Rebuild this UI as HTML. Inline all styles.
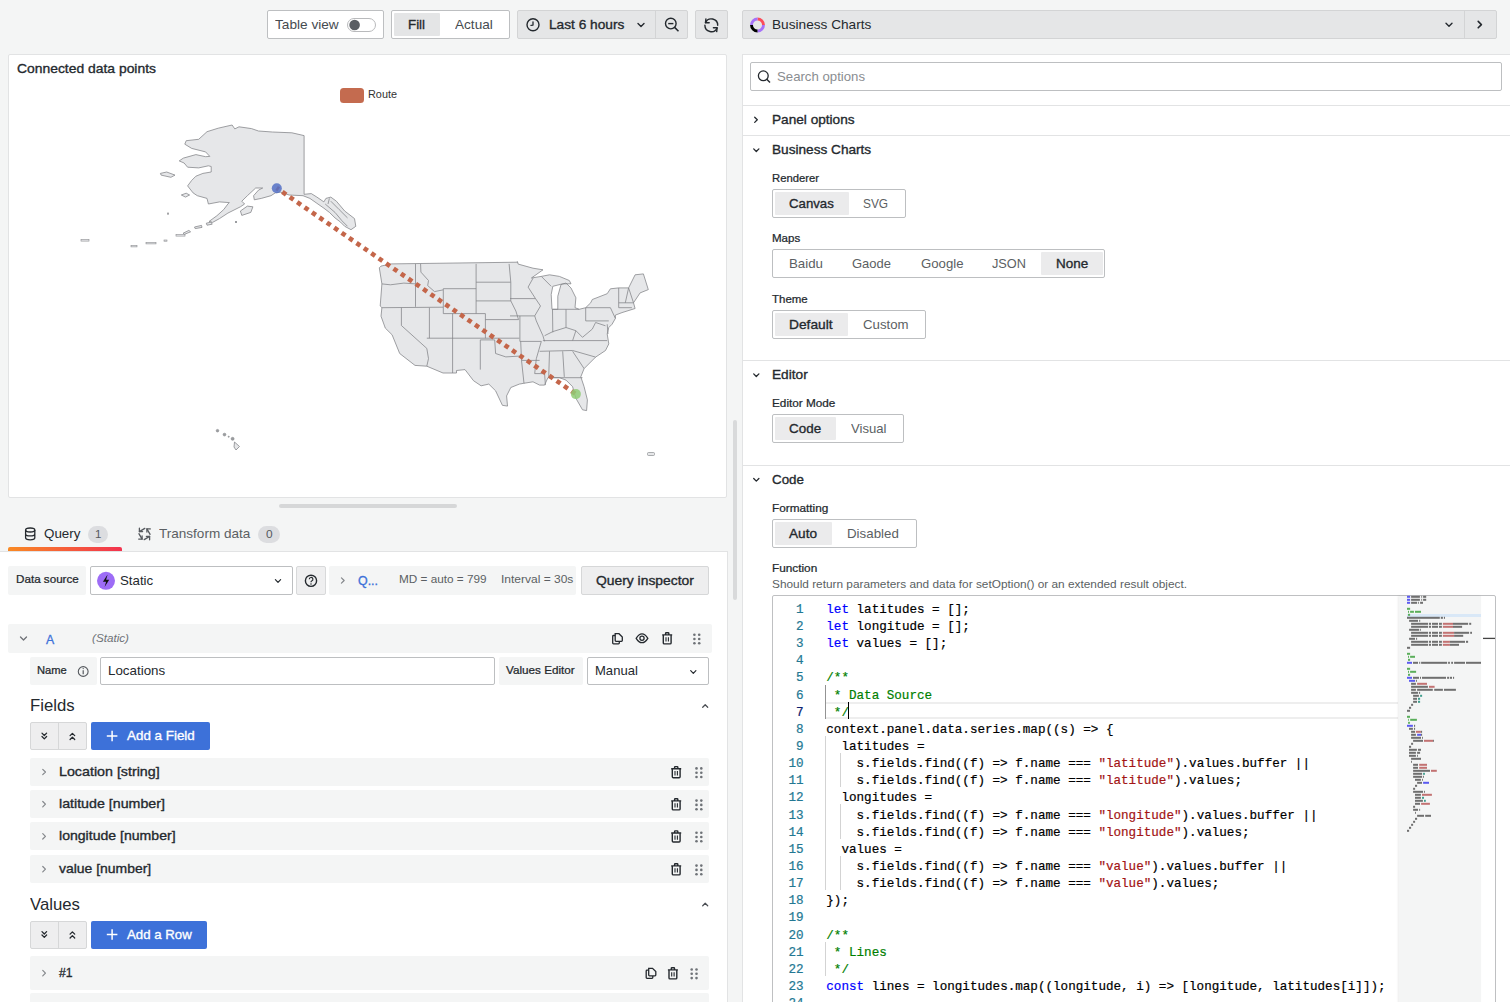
<!DOCTYPE html>
<html><head><meta charset="utf-8"><style>
html,body{margin:0;padding:0}
body{width:1510px;height:1002px;position:relative;overflow:hidden;background:#f4f5f5;font-family:"Liberation Sans",sans-serif}
.b{position:absolute;display:block}
.t{position:absolute;white-space:pre;font-family:"Liberation Sans",sans-serif}
.m{position:absolute;white-space:pre;font-family:"Liberation Mono",monospace;-webkit-text-stroke:0.2px currentColor}
</style></head><body>
<div class="b" style="left:267.00px;top:10.00px;width:117.00px;height:29.00px;background:#fff;border:1px solid #bdbfc1;border-radius:2px;box-sizing:border-box"></div>
<div class="t" style="left:275.20px;top:16.25px;line-height:17px;font-size:12.8px;font-weight:400;color:#464b50;transform:scaleX(1.0659);transform-origin:0 0;">Table view</div>
<div class="b" style="left:347.00px;top:18.00px;width:29.00px;height:14.00px;background:#fff;border:1px solid #b9babc;border-radius:7px;box-sizing:border-box"></div>
<div class="b" style="left:391.00px;top:10.00px;width:119.00px;height:29.00px;background:#fff;border:1px solid #bdbfc1;border-radius:2px;box-sizing:border-box"></div>
<div class="b" style="left:394.00px;top:13.00px;width:46.00px;height:23.00px;background:#e4e5e6;border-radius:1px"></div>
<div class="t" style="left:408.40px;top:16.25px;line-height:17px;font-size:12.8px;font-weight:400;color:#24292e;transform:scaleX(1.0398);transform-origin:0 0;-webkit-text-stroke:0.330px #24292e;">Fill</div>
<div class="t" style="left:454.60px;top:16.25px;line-height:17px;font-size:12.8px;font-weight:400;color:#464b50;transform:scaleX(1.0626);transform-origin:0 0;">Actual</div>
<div class="b" style="left:517.00px;top:10.00px;width:171.00px;height:29.00px;background:#e5e6e7;border:1px solid #d3d4d5;border-radius:2px;box-sizing:border-box"></div>
<div class="b" style="left:655.00px;top:10.00px;width:1.00px;height:29.00px;background:#d3d4d5"></div>
<div class="t" style="left:548.70px;top:16.25px;line-height:17px;font-size:12.8px;font-weight:400;color:#24292e;transform:scaleX(1.0690);transform-origin:0 0;-webkit-text-stroke:0.330px #24292e;">Last 6 hours</div>
<div class="b" style="left:695.00px;top:10.00px;width:33.00px;height:29.00px;background:#e5e6e7;border:1px solid #d3d4d5;border-radius:2px;box-sizing:border-box"></div>
<div class="b" style="left:742.00px;top:10.00px;width:755.00px;height:29.00px;background:#e5e6e7;border:1px solid #d3d4d5;border-radius:2px;box-sizing:border-box"></div>
<div class="b" style="left:1464.00px;top:10.00px;width:1.00px;height:29.00px;background:#d3d4d5"></div>
<div class="t" style="left:771.60px;top:16.25px;line-height:17px;font-size:12.8px;font-weight:400;color:#24292e;transform:scaleX(1.0666);transform-origin:0 0;">Business Charts</div>
<div class="b" style="left:8.00px;top:54.00px;width:719.00px;height:444.00px;background:#fff;border:1px solid #e2e3e4;border-radius:2px;box-sizing:border-box"></div>
<div class="t" style="left:17.00px;top:59.95px;line-height:17px;font-size:12.8px;font-weight:400;color:#24292e;transform:scaleX(1.0852);transform-origin:0 0;-webkit-text-stroke:0.330px #24292e;">Connected data points</div>
<div class="b" style="left:340.00px;top:88.00px;width:24.00px;height:14.50px;background:#c46b4f;border-radius:3.5px"></div>
<div class="t" style="left:367.80px;top:87.23px;line-height:15px;font-size:11.3px;font-weight:400;color:#333;transform:scaleX(0.9618);transform-origin:0 0;">Route</div>
<div class="b" style="left:279.00px;top:503.50px;width:178.00px;height:4.50px;background:#d6d7d8;border-radius:2px"></div>
<div class="t" style="left:44.10px;top:525.45px;line-height:17px;font-size:12.8px;font-weight:400;color:#24292e;transform:scaleX(1.0444);transform-origin:0 0;">Query</div>
<div class="b" style="left:88.40px;top:526.00px;width:19.30px;height:17.00px;background:#dcdde0;border-radius:8.5px"></div>
<div class="t" style="left:94.60px;top:527.13px;line-height:15px;font-size:11.5px;font-weight:400;color:#55595e;transform:scaleX(1.0008);transform-origin:0 0;">1</div>
<div class="b" style="left:8.00px;top:546.50px;width:114.00px;height:4.00px;background:linear-gradient(90deg,#f98a24,#f2334f);border-radius:2px 2px 0 0"></div>
<div class="t" style="left:159.00px;top:525.45px;line-height:17px;font-size:12.8px;font-weight:400;color:#5b5f63;transform:scaleX(1.0579);transform-origin:0 0;">Transform data</div>
<div class="b" style="left:258.30px;top:526.00px;width:21.40px;height:17.00px;background:#dcdde0;border-radius:8.5px"></div>
<div class="t" style="left:265.50px;top:527.13px;line-height:15px;font-size:11.5px;font-weight:400;color:#55595e;transform:scaleX(1.0320);transform-origin:0 0;">0</div>
<div class="b" style="left:0.00px;top:551.00px;width:728.00px;height:451.00px;background:#fff;border-top:1px solid #e2e3e4;border-right:1px solid #e2e3e4;box-sizing:border-box"></div>
<div class="b" style="left:733.00px;top:420.00px;width:3.50px;height:180.00px;background:#d9dadb;border-radius:2px"></div>
<div class="b" style="left:8.00px;top:566.00px;width:78.00px;height:29.00px;background:#f4f5f5;border-radius:2px"></div>
<div class="t" style="left:15.70px;top:572.03px;line-height:14px;font-size:11px;font-weight:400;color:#24292e;transform:scaleX(1.0590);transform-origin:0 0;-webkit-text-stroke:0.244px #24292e;">Data source</div>
<div class="b" style="left:90.00px;top:566.00px;width:203.00px;height:29.00px;background:#fff;border:1px solid #bdbfc1;border-radius:2px;box-sizing:border-box"></div>
<div class="t" style="left:120.20px;top:572.45px;line-height:17px;font-size:12.8px;font-weight:400;color:#24292e;transform:scaleX(1.0371);transform-origin:0 0;">Static</div>
<div class="b" style="left:296.00px;top:566.00px;width:30.00px;height:29.00px;background:#efeff0;border:1px solid #d8d9da;border-radius:2px;box-sizing:border-box"></div>
<div class="b" style="left:329.00px;top:566.00px;width:247.00px;height:29.00px;background:#f4f5f5;border-radius:2px"></div>
<div class="t" style="left:357.60px;top:572.15px;line-height:17px;font-size:12.8px;font-weight:400;color:#3d71d9;transform:scaleX(0.9697);transform-origin:0 0;-webkit-text-stroke:0.330px #3d71d9;">Q...</div>
<div class="t" style="left:399.00px;top:572.03px;line-height:14px;font-size:11px;font-weight:400;color:#5b5f63;transform:scaleX(1.0679);transform-origin:0 0;">MD = auto = 799</div>
<div class="t" style="left:501.00px;top:572.03px;line-height:14px;font-size:11px;font-weight:400;color:#5b5f63;transform:scaleX(1.0898);transform-origin:0 0;">Interval = 30s</div>
<div class="b" style="left:581.00px;top:566.00px;width:128.00px;height:29.00px;background:#eeeeef;border:1px solid #d6d7d8;border-radius:2px;box-sizing:border-box"></div>
<div class="t" style="left:596.00px;top:572.45px;line-height:17px;font-size:12.8px;font-weight:400;color:#24292e;transform:scaleX(1.0836);transform-origin:0 0;-webkit-text-stroke:0.330px #24292e;">Query inspector</div>
<div class="b" style="left:8.00px;top:624.00px;width:704.00px;height:29.00px;background:#f4f5f5;border-radius:2px"></div>
<div class="t" style="left:45.70px;top:630.65px;line-height:17px;font-size:12.8px;font-weight:400;color:#3d71d9;transform:scaleX(0.9604);transform-origin:0 0;-webkit-text-stroke:0.3px #3d71d9;">A</div>
<div class="t" style="left:92.40px;top:630.93px;line-height:14px;font-size:11px;font-weight:400;color:#6e7277;font-style:italic;transform:scaleX(1.0621);transform-origin:0 0;">(Static)</div>
<div class="b" style="left:30.00px;top:657.00px;width:67.00px;height:28.00px;background:#f4f5f5;border-radius:2px"></div>
<div class="t" style="left:37.40px;top:663.23px;line-height:14px;font-size:11px;font-weight:400;color:#24292e;transform:scaleX(1.0157);transform-origin:0 0;-webkit-text-stroke:0.244px #24292e;">Name</div>
<div class="b" style="left:100.00px;top:657.00px;width:395.00px;height:28.00px;background:#fff;border:1px solid #bdbfc1;border-radius:2px;box-sizing:border-box"></div>
<div class="t" style="left:108.30px;top:662.15px;line-height:17px;font-size:12.8px;font-weight:400;color:#24292e;transform:scaleX(1.0440);transform-origin:0 0;">Locations</div>
<div class="b" style="left:499.00px;top:657.00px;width:84.00px;height:28.00px;background:#f4f5f5;border-radius:2px"></div>
<div class="t" style="left:506.30px;top:663.23px;line-height:14px;font-size:11px;font-weight:400;color:#24292e;transform:scaleX(1.0634);transform-origin:0 0;-webkit-text-stroke:0.244px #24292e;">Values Editor</div>
<div class="b" style="left:586.50px;top:657.00px;width:122.50px;height:28.00px;background:#fff;border:1px solid #bdbfc1;border-radius:2px;box-sizing:border-box"></div>
<div class="t" style="left:595.30px;top:662.15px;line-height:17px;font-size:12.8px;font-weight:400;color:#24292e;transform:scaleX(1.0196);transform-origin:0 0;">Manual</div>
<div class="t" style="left:30.40px;top:695.19px;line-height:21px;font-size:16.2px;font-weight:400;color:#24292e;transform:scaleX(1.0321);transform-origin:0 0;">Fields</div>
<div class="b" style="left:30.30px;top:722.00px;width:56.50px;height:28.00px;background:#eeeeef;border:1px solid #d6d7d8;border-radius:2px;box-sizing:border-box"></div>
<div class="b" style="left:58.20px;top:722.00px;width:1.00px;height:28.00px;background:#d6d7d8"></div>
<div class="b" style="left:91.10px;top:722.00px;width:118.70px;height:28.00px;background:#3d71d9;border-radius:2px"></div>
<div class="t" style="left:127.30px;top:727.15px;line-height:17px;font-size:12.8px;font-weight:400;color:#fff;transform:scaleX(1.0472);transform-origin:0 0;-webkit-text-stroke:0.330px #fff;">Add a Field</div>
<div class="b" style="left:30.30px;top:758.00px;width:678.50px;height:28.00px;background:#f4f5f5;border-radius:2px"></div>
<div class="t" style="left:58.80px;top:763.05px;line-height:17px;font-size:12.8px;font-weight:400;color:#24292e;transform:scaleX(1.1145);transform-origin:0 0;-webkit-text-stroke:0.330px #24292e;">Location [string]</div>
<div class="b" style="left:30.30px;top:790.20px;width:678.50px;height:28.00px;background:#f4f5f5;border-radius:2px"></div>
<div class="t" style="left:58.80px;top:795.25px;line-height:17px;font-size:12.8px;font-weight:400;color:#24292e;transform:scaleX(1.1108);transform-origin:0 0;-webkit-text-stroke:0.330px #24292e;">latitude [number]</div>
<div class="b" style="left:30.30px;top:822.30px;width:678.50px;height:28.00px;background:#f4f5f5;border-radius:2px"></div>
<div class="t" style="left:58.80px;top:827.35px;line-height:17px;font-size:12.8px;font-weight:400;color:#24292e;transform:scaleX(1.0998);transform-origin:0 0;-webkit-text-stroke:0.330px #24292e;">longitude [number]</div>
<div class="b" style="left:30.30px;top:855.20px;width:678.50px;height:28.00px;background:#f4f5f5;border-radius:2px"></div>
<div class="t" style="left:58.80px;top:860.25px;line-height:17px;font-size:12.8px;font-weight:400;color:#24292e;transform:scaleX(1.0890);transform-origin:0 0;-webkit-text-stroke:0.330px #24292e;">value [number]</div>
<div class="t" style="left:30.40px;top:893.69px;line-height:21px;font-size:16.2px;font-weight:400;color:#24292e;transform:scaleX(1.0346);transform-origin:0 0;">Values</div>
<div class="b" style="left:30.30px;top:920.50px;width:56.50px;height:28.00px;background:#eeeeef;border:1px solid #d6d7d8;border-radius:2px;box-sizing:border-box"></div>
<div class="b" style="left:58.20px;top:920.50px;width:1.00px;height:28.00px;background:#d6d7d8"></div>
<div class="b" style="left:91.10px;top:920.50px;width:115.70px;height:28.00px;background:#3d71d9;border-radius:2px"></div>
<div class="t" style="left:127.30px;top:925.65px;line-height:17px;font-size:12.8px;font-weight:400;color:#fff;transform:scaleX(1.0334);transform-origin:0 0;-webkit-text-stroke:0.330px #fff;">Add a Row</div>
<div class="b" style="left:30.30px;top:956.10px;width:678.50px;height:34.00px;background:#f4f5f5;border-radius:2px"></div>
<div class="t" style="left:58.80px;top:964.15px;line-height:17px;font-size:12.8px;font-weight:400;color:#24292e;transform:scaleX(0.9483);transform-origin:0 0;-webkit-text-stroke:0.330px #24292e;">#1</div>
<div class="b" style="left:30.30px;top:993.00px;width:678.50px;height:20.00px;background:#f4f5f5;border-radius:2px"></div>
<div class="b" style="left:742.00px;top:54.00px;width:768.00px;height:948.00px;background:#fff;border-left:1px solid #e2e3e4;border-top:1px solid #e2e3e4;box-sizing:border-box"></div>
<div class="b" style="left:749.90px;top:62.40px;width:752.60px;height:28.60px;background:#fff;border:1px solid #bdbfc1;border-radius:2px;box-sizing:border-box"></div>
<div class="t" style="left:777.00px;top:68.25px;line-height:17px;font-size:12.8px;font-weight:400;color:#8a8d91;transform:scaleX(1.0307);transform-origin:0 0;">Search options</div>
<div class="b" style="left:742.00px;top:105.00px;width:768.00px;height:1.00px;background:#e2e3e4"></div>
<div class="t" style="left:772.20px;top:111.15px;line-height:17px;font-size:12.8px;font-weight:400;color:#24292e;transform:scaleX(1.0649);transform-origin:0 0;-webkit-text-stroke:0.330px #24292e;">Panel options</div>
<div class="b" style="left:742.00px;top:135.00px;width:768.00px;height:1.00px;background:#e2e3e4"></div>
<div class="t" style="left:772.20px;top:141.35px;line-height:17px;font-size:12.8px;font-weight:400;color:#24292e;transform:scaleX(1.0645);transform-origin:0 0;-webkit-text-stroke:0.330px #24292e;">Business Charts</div>
<div class="t" style="left:772.20px;top:171.13px;line-height:14px;font-size:11px;font-weight:400;color:#24292e;transform:scaleX(1.0250);transform-origin:0 0;-webkit-text-stroke:0.244px #24292e;">Renderer</div>
<div class="b" style="left:772.20px;top:189.00px;width:133.50px;height:28.80px;background:#fff;border:1px solid #bdbfc1;border-radius:2px;box-sizing:border-box"></div>
<div class="b" style="left:775.00px;top:192.00px;width:74.00px;height:22.70px;background:#ebebec;border-radius:1px"></div>
<div class="t" style="left:789.20px;top:195.05px;line-height:17px;font-size:12.8px;font-weight:400;color:#24292e;transform:scaleX(1.0323);transform-origin:0 0;-webkit-text-stroke:0.330px #24292e;">Canvas</div>
<div class="t" style="left:863.40px;top:195.05px;line-height:17px;font-size:12.8px;font-weight:400;color:#5b5f63;transform:scaleX(0.9285);transform-origin:0 0;">SVG</div>
<div class="t" style="left:772.20px;top:231.23px;line-height:14px;font-size:11px;font-weight:400;color:#24292e;transform:scaleX(1.0485);transform-origin:0 0;-webkit-text-stroke:0.244px #24292e;">Maps</div>
<div class="b" style="left:772.20px;top:249.20px;width:332.70px;height:28.80px;background:#fff;border:1px solid #bdbfc1;border-radius:2px;box-sizing:border-box"></div>
<div class="t" style="left:789.00px;top:255.25px;line-height:17px;font-size:12.8px;font-weight:400;color:#5b5f63;transform:scaleX(1.0386);transform-origin:0 0;">Baidu</div>
<div class="t" style="left:852.00px;top:255.25px;line-height:17px;font-size:12.8px;font-weight:400;color:#5b5f63;transform:scaleX(1.0149);transform-origin:0 0;">Gaode</div>
<div class="t" style="left:920.70px;top:255.25px;line-height:17px;font-size:12.8px;font-weight:400;color:#5b5f63;transform:scaleX(1.0298);transform-origin:0 0;">Google</div>
<div class="t" style="left:992.40px;top:255.25px;line-height:17px;font-size:12.8px;font-weight:400;color:#5b5f63;transform:scaleX(0.9960);transform-origin:0 0;">JSON</div>
<div class="b" style="left:1041.20px;top:252.20px;width:61.70px;height:22.70px;background:#ebebec;border-radius:1px"></div>
<div class="t" style="left:1055.80px;top:255.25px;line-height:17px;font-size:12.8px;font-weight:400;color:#24292e;transform:scaleX(1.0524);transform-origin:0 0;-webkit-text-stroke:0.330px #24292e;">None</div>
<div class="t" style="left:772.20px;top:292.43px;line-height:14px;font-size:11px;font-weight:400;color:#24292e;transform:scaleX(1.0429);transform-origin:0 0;-webkit-text-stroke:0.244px #24292e;">Theme</div>
<div class="b" style="left:772.20px;top:310.30px;width:153.50px;height:28.80px;background:#fff;border:1px solid #bdbfc1;border-radius:2px;box-sizing:border-box"></div>
<div class="b" style="left:775.20px;top:313.30px;width:72.50px;height:22.70px;background:#ebebec;border-radius:1px"></div>
<div class="t" style="left:789.00px;top:316.35px;line-height:17px;font-size:12.8px;font-weight:400;color:#24292e;transform:scaleX(1.0751);transform-origin:0 0;-webkit-text-stroke:0.330px #24292e;">Default</div>
<div class="t" style="left:862.50px;top:316.35px;line-height:17px;font-size:12.8px;font-weight:400;color:#5b5f63;transform:scaleX(1.0318);transform-origin:0 0;">Custom</div>
<div class="b" style="left:742.00px;top:360.00px;width:768.00px;height:1.00px;background:#e2e3e4"></div>
<div class="t" style="left:772.30px;top:366.45px;line-height:17px;font-size:12.8px;font-weight:400;color:#24292e;transform:scaleX(1.0677);transform-origin:0 0;-webkit-text-stroke:0.330px #24292e;">Editor</div>
<div class="t" style="left:772.20px;top:396.33px;line-height:14px;font-size:11px;font-weight:400;color:#24292e;transform:scaleX(1.0691);transform-origin:0 0;-webkit-text-stroke:0.244px #24292e;">Editor Mode</div>
<div class="b" style="left:772.30px;top:414.10px;width:131.50px;height:28.80px;background:#fff;border:1px solid #bdbfc1;border-radius:2px;box-sizing:border-box"></div>
<div class="b" style="left:775.00px;top:417.10px;width:60.90px;height:22.70px;background:#ebebec;border-radius:1px"></div>
<div class="t" style="left:789.20px;top:420.15px;line-height:17px;font-size:12.8px;font-weight:400;color:#24292e;transform:scaleX(1.0491);transform-origin:0 0;-webkit-text-stroke:0.330px #24292e;">Code</div>
<div class="t" style="left:851.00px;top:420.15px;line-height:17px;font-size:12.8px;font-weight:400;color:#5b5f63;transform:scaleX(1.0222);transform-origin:0 0;">Visual</div>
<div class="b" style="left:742.00px;top:465.00px;width:768.00px;height:1.00px;background:#e2e3e4"></div>
<div class="t" style="left:772.40px;top:471.15px;line-height:17px;font-size:12.8px;font-weight:400;color:#24292e;transform:scaleX(1.0426);transform-origin:0 0;-webkit-text-stroke:0.330px #24292e;">Code</div>
<div class="t" style="left:772.20px;top:501.13px;line-height:14px;font-size:11px;font-weight:400;color:#24292e;transform:scaleX(1.0710);transform-origin:0 0;-webkit-text-stroke:0.244px #24292e;">Formatting</div>
<div class="b" style="left:771.90px;top:519.20px;width:145.10px;height:28.80px;background:#fff;border:1px solid #bdbfc1;border-radius:2px;box-sizing:border-box"></div>
<div class="b" style="left:775.00px;top:522.20px;width:56.60px;height:22.70px;background:#ebebec;border-radius:1px"></div>
<div class="t" style="left:789.30px;top:525.25px;line-height:17px;font-size:12.8px;font-weight:400;color:#24292e;transform:scaleX(1.0634);transform-origin:0 0;-webkit-text-stroke:0.330px #24292e;">Auto</div>
<div class="t" style="left:847.20px;top:525.25px;line-height:17px;font-size:12.8px;font-weight:400;color:#5b5f63;transform:scaleX(1.0401);transform-origin:0 0;">Disabled</div>
<div class="t" style="left:772.20px;top:561.33px;line-height:14px;font-size:11px;font-weight:400;color:#24292e;transform:scaleX(1.0714);transform-origin:0 0;-webkit-text-stroke:0.244px #24292e;">Function</div>
<div class="t" style="left:772.40px;top:577.23px;line-height:14px;font-size:11px;font-weight:400;color:#5b5f63;transform:scaleX(1.0757);transform-origin:0 0;">Should return parameters and data for setOption() or an extended result object.</div>
<div class="b" style="left:772.40px;top:595.40px;width:723.60px;height:420.00px;background:#fff;border:1px solid #bfc0c2;border-radius:2px;box-sizing:border-box"></div>
<div class="b" style="left:826.00px;top:701.69px;width:572.00px;height:16.83px;border-top:2px solid #eeeeee;border-bottom:2px solid #eeeeee;box-sizing:border-box"></div>
<div class="m" style="left:826.3px;top:602.00px;line-height:17.1px;font-size:12.6px;color:#000"><span style="color:#0000ff">let</span> latitudes = [];</div>
<div class="m" style="left:796.04px;top:602.00px;line-height:17.1px;font-size:12.6px;color:#237893">1</div>
<div class="m" style="left:826.3px;top:619.00px;line-height:17.1px;font-size:12.6px;color:#000"><span style="color:#0000ff">let</span> longitude = [];</div>
<div class="m" style="left:796.04px;top:619.00px;line-height:17.1px;font-size:12.6px;color:#237893">2</div>
<div class="m" style="left:826.3px;top:636.00px;line-height:17.1px;font-size:12.6px;color:#000"><span style="color:#0000ff">let</span> values = [];</div>
<div class="m" style="left:796.04px;top:636.00px;line-height:17.1px;font-size:12.6px;color:#237893">3</div>
<div class="m" style="left:826.3px;top:653.00px;line-height:17.1px;font-size:12.6px;color:#000"></div>
<div class="m" style="left:796.04px;top:653.00px;line-height:17.1px;font-size:12.6px;color:#237893">4</div>
<div class="m" style="left:826.3px;top:670.00px;line-height:17.1px;font-size:12.6px;color:#000"><span style="color:#008000">/**</span></div>
<div class="m" style="left:796.04px;top:670.00px;line-height:17.1px;font-size:12.6px;color:#237893">5</div>
<div class="m" style="left:826.3px;top:688.00px;line-height:17.1px;font-size:12.6px;color:#000"><span style="color:#008000"> * Data Source</span></div>
<div class="m" style="left:796.04px;top:688.00px;line-height:17.1px;font-size:12.6px;color:#237893">6</div>
<div class="m" style="left:826.3px;top:705.00px;line-height:17.1px;font-size:12.6px;color:#000"><span style="color:#008000"> */</span></div>
<div class="m" style="left:796.04px;top:705.00px;line-height:17.1px;font-size:12.6px;color:#0b216f">7</div>
<div class="m" style="left:826.3px;top:722.00px;line-height:17.1px;font-size:12.6px;color:#000">context.panel.data.series.map((s) =&gt; {</div>
<div class="m" style="left:796.04px;top:722.00px;line-height:17.1px;font-size:12.6px;color:#237893">8</div>
<div class="m" style="left:826.3px;top:739.00px;line-height:17.1px;font-size:12.6px;color:#000">  latitudes =</div>
<div class="m" style="left:796.04px;top:739.00px;line-height:17.1px;font-size:12.6px;color:#237893">9</div>
<div class="m" style="left:826.3px;top:756.00px;line-height:17.1px;font-size:12.6px;color:#000">    s.fields.find((f) =&gt; f.name === <span style="color:#a31515">"latitude"</span>).values.buffer ||</div>
<div class="m" style="left:788.48px;top:756.00px;line-height:17.1px;font-size:12.6px;color:#237893">10</div>
<div class="m" style="left:826.3px;top:773.00px;line-height:17.1px;font-size:12.6px;color:#000">    s.fields.find((f) =&gt; f.name === <span style="color:#a31515">"latitude"</span>).values;</div>
<div class="m" style="left:788.48px;top:773.00px;line-height:17.1px;font-size:12.6px;color:#237893">11</div>
<div class="m" style="left:826.3px;top:790.00px;line-height:17.1px;font-size:12.6px;color:#000">  longitudes =</div>
<div class="m" style="left:788.48px;top:790.00px;line-height:17.1px;font-size:12.6px;color:#237893">12</div>
<div class="m" style="left:826.3px;top:808.00px;line-height:17.1px;font-size:12.6px;color:#000">    s.fields.find((f) =&gt; f.name === <span style="color:#a31515">"longitude"</span>).values.buffer ||</div>
<div class="m" style="left:788.48px;top:808.00px;line-height:17.1px;font-size:12.6px;color:#237893">13</div>
<div class="m" style="left:826.3px;top:825.00px;line-height:17.1px;font-size:12.6px;color:#000">    s.fields.find((f) =&gt; f.name === <span style="color:#a31515">"longitude"</span>).values;</div>
<div class="m" style="left:788.48px;top:825.00px;line-height:17.1px;font-size:12.6px;color:#237893">14</div>
<div class="m" style="left:826.3px;top:842.00px;line-height:17.1px;font-size:12.6px;color:#000">  values =</div>
<div class="m" style="left:788.48px;top:842.00px;line-height:17.1px;font-size:12.6px;color:#237893">15</div>
<div class="m" style="left:826.3px;top:859.00px;line-height:17.1px;font-size:12.6px;color:#000">    s.fields.find((f) =&gt; f.name === <span style="color:#a31515">"value"</span>).values.buffer ||</div>
<div class="m" style="left:788.48px;top:859.00px;line-height:17.1px;font-size:12.6px;color:#237893">16</div>
<div class="m" style="left:826.3px;top:876.00px;line-height:17.1px;font-size:12.6px;color:#000">    s.fields.find((f) =&gt; f.name === <span style="color:#a31515">"value"</span>).values;</div>
<div class="m" style="left:788.48px;top:876.00px;line-height:17.1px;font-size:12.6px;color:#237893">17</div>
<div class="m" style="left:826.3px;top:893.00px;line-height:17.1px;font-size:12.6px;color:#000">});</div>
<div class="m" style="left:788.48px;top:893.00px;line-height:17.1px;font-size:12.6px;color:#237893">18</div>
<div class="m" style="left:826.3px;top:910.00px;line-height:17.1px;font-size:12.6px;color:#000"></div>
<div class="m" style="left:788.48px;top:910.00px;line-height:17.1px;font-size:12.6px;color:#237893">19</div>
<div class="m" style="left:826.3px;top:928.00px;line-height:17.1px;font-size:12.6px;color:#000"><span style="color:#008000">/**</span></div>
<div class="m" style="left:788.48px;top:928.00px;line-height:17.1px;font-size:12.6px;color:#237893">20</div>
<div class="m" style="left:826.3px;top:945.00px;line-height:17.1px;font-size:12.6px;color:#000"><span style="color:#008000"> * Lines</span></div>
<div class="m" style="left:788.48px;top:945.00px;line-height:17.1px;font-size:12.6px;color:#237893">21</div>
<div class="m" style="left:826.3px;top:962.00px;line-height:17.1px;font-size:12.6px;color:#000"><span style="color:#008000"> */</span></div>
<div class="m" style="left:788.48px;top:962.00px;line-height:17.1px;font-size:12.6px;color:#237893">22</div>
<div class="m" style="left:826.3px;top:979.00px;line-height:17.1px;font-size:12.6px;color:#000"><span style="color:#0000ff">const</span> lines = longitudes.map((longitude, i) =&gt; [longitude, latitudes[i]]);</div>
<div class="m" style="left:788.48px;top:979.00px;line-height:17.1px;font-size:12.6px;color:#237893">23</div>
<div class="m" style="left:826.3px;top:996.00px;line-height:17.1px;font-size:12.6px;color:#000"></div>
<div class="m" style="left:788.48px;top:996.00px;line-height:17.1px;font-size:12.6px;color:#237893">24</div>
<div class="m" style="left:826.3px;top:1013.00px;line-height:17.1px;font-size:12.6px;color:#000"><span style="color:#008000">/**</span></div>
<div class="m" style="left:788.48px;top:1013.00px;line-height:17.1px;font-size:12.6px;color:#237893">25</div>
<div class="b" style="left:825.10px;top:684.55px;width:1.00px;height:34.27px;background:#939393"></div>
<div class="b" style="left:825.10px;top:735.96px;width:1.00px;height:154.21px;background:#d3d3d3"></div>
<div class="b" style="left:840.20px;top:753.09px;width:1.00px;height:34.27px;background:#d3d3d3"></div>
<div class="b" style="left:840.20px;top:804.49px;width:1.00px;height:34.27px;background:#d3d3d3"></div>
<div class="b" style="left:840.20px;top:855.89px;width:1.00px;height:34.27px;background:#d3d3d3"></div>
<div class="b" style="left:825.10px;top:941.56px;width:1.00px;height:34.27px;background:#d3d3d3"></div>
<div class="b" style="left:847.80px;top:701.69px;width:1.60px;height:16.93px;background:#000"></div>
<div class="b" style="left:1398.50px;top:596.40px;width:82.50px;height:410.00px;background:#f4f5f5;box-shadow:-1px 0 2px rgba(0,0,0,0.08)"></div>
<div class="b" style="left:1407.00px;top:614.00px;width:74.00px;height:3.00px;background:#d9e8f7"></div>
<svg class="b" style="left:0;top:0" width="1510" height="1002" viewBox="0 0 1510 1002">
<circle cx="354.6" cy="25" r="5.3" fill="#5a5e63"/>
<circle cx="533" cy="24.8" r="6" fill="none" stroke="#24292e" stroke-width="1.4"/>
<polyline points="533.00,21.80 533.00,25.10 531.00,25.40" stroke="#24292e" stroke-width="1.3" fill="none" stroke-linecap="round" stroke-linejoin="round" />
<polyline points="638.00,23.50 641.00,26.50 644.00,23.50" stroke="#24292e" stroke-width="1.4" fill="none" stroke-linecap="round" stroke-linejoin="round" />
<circle cx="670.8" cy="23.6" r="5.3" fill="none" stroke="#24292e" stroke-width="1.4"/>
<line x1="674.6" y1="27.4" x2="678.5" y2="31.3" stroke="#24292e" stroke-width="1.5" />
<line x1="668.2" y1="23.6" x2="673.4" y2="23.6" stroke="#24292e" stroke-width="1.4" />
<path d="M717.7 25.3 A6.4 6.4 0 0 0 705.5 22.6 M704.9 25.3 A6.4 6.4 0 0 0 717.1 28.0" fill="none" stroke="#24292e" stroke-width="1.4" stroke-linecap="round"/>
<polyline points="705.90,19.00 705.50,22.80 709.20,22.80" stroke="#24292e" stroke-width="1.4" fill="none" stroke-linecap="round" stroke-linejoin="round" />
<polyline points="713.40,27.80 717.10,27.80 716.70,31.60" stroke="#24292e" stroke-width="1.4" fill="none" stroke-linecap="round" stroke-linejoin="round" />
<path d="M757.50 19.00 A6 6 0 0 1 763.50 25.00" fill="none" stroke="#fb4e5a" stroke-width="2.9"/>
<path d="M763.50 25.00 A6 6 0 0 1 757.50 31.00" fill="none" stroke="#a672f9" stroke-width="2.9"/>
<path d="M757.50 31.00 A6 6 0 0 1 751.50 25.00" fill="none" stroke="#000" stroke-width="2.9"/>
<path d="M751.50 25.00 A6 6 0 0 1 757.50 19.00" fill="none" stroke="#a672f9" stroke-width="2.9"/>
<polyline points="1446.00,23.30 1449.00,26.30 1452.00,23.30" stroke="#24292e" stroke-width="1.4" fill="none" stroke-linecap="round" stroke-linejoin="round" />
<polyline points="1478.20,21.40 1481.40,24.60 1478.20,27.80" stroke="#24292e" stroke-width="1.6" fill="none" stroke-linecap="round" stroke-linejoin="round" />
<ellipse cx="30.2" cy="530" rx="4.6" ry="2" fill="none" stroke="#24292e" stroke-width="1.3"/>
<path d="M25.6 530 V537.8 A4.6 2 0 0 0 34.8 537.8 V530 M25.6 533.9 A4.6 2 0 0 0 34.8 533.9" fill="none" stroke="#24292e" stroke-width="1.3"/>
<polyline points="139.40,528.20 139.40,531.60 142.60,531.60" stroke="#55595e" stroke-width="1.3" fill="none" stroke-linecap="round" stroke-linejoin="round" />
<polyline points="139.40,531.60 144.80,528.40" stroke="#55595e" stroke-width="1.3" fill="none" stroke-linecap="round" stroke-linejoin="round" />
<polyline points="150.30,528.90 146.90,528.90 146.90,532.10" stroke="#55595e" stroke-width="1.3" fill="none" stroke-linecap="round" stroke-linejoin="round" />
<polyline points="146.90,528.90 150.10,534.30" stroke="#55595e" stroke-width="1.3" fill="none" stroke-linecap="round" stroke-linejoin="round" />
<polyline points="149.60,539.80 149.60,536.40 146.40,536.40" stroke="#55595e" stroke-width="1.3" fill="none" stroke-linecap="round" stroke-linejoin="round" />
<polyline points="149.60,536.40 144.20,539.60" stroke="#55595e" stroke-width="1.3" fill="none" stroke-linecap="round" stroke-linejoin="round" />
<polyline points="138.70,539.10 142.10,539.10 142.10,535.90" stroke="#55595e" stroke-width="1.3" fill="none" stroke-linecap="round" stroke-linejoin="round" />
<polyline points="142.10,539.10 138.90,533.70" stroke="#55595e" stroke-width="1.3" fill="none" stroke-linecap="round" stroke-linejoin="round" />
<circle cx="106" cy="580.8" r="9" fill="#9d6cf6"/>
<path d="M107.6 574.6 L102.9 581.8 L106.1 581.8 L104.6 587 L109.2 579.7 L106.1 579.7 Z" fill="#111"/>
<polyline points="275.40,579.70 278.00,582.30 280.60,579.70" stroke="#24292e" stroke-width="1.2" fill="none" stroke-linecap="round" stroke-linejoin="round" />
<circle cx="311" cy="580.8" r="5.6" fill="none" stroke="#24292e" stroke-width="1.4"/>
<path d="M309.3 579.3 A1.8 1.8 0 1 1 311.6 581 Q311 581.4 311 582.3" fill="none" stroke="#24292e" stroke-width="1.2"/>
<circle cx="311" cy="584" r="0.75" fill="#24292e"/>
<polyline points="341.45,577.80 344.15,580.50 341.45,583.20" stroke="#84878b" stroke-width="1.2" fill="none" stroke-linecap="round" stroke-linejoin="round" />
<polyline points="20.50,637.00 23.50,640.00 26.50,637.00" stroke="#6e7277" stroke-width="1.3" fill="none" stroke-linecap="round" stroke-linejoin="round" />
<path d="M615.2 635.5 H613.5 Q612.7 635.5 612.7 636.3 V643 Q612.7 643.8 613.5 643.8 H618.5 Q619.3 643.8 619.3 643 V641.3" fill="none" stroke="#24292e" stroke-width="1.3"/>
<path d="M615.2 633.7 H619 L622.3 637 V640.5 Q622.3 641.3 621.5 641.3 H616 Q615.2 641.3 615.2 640.5 Z" fill="none" stroke="#24292e" stroke-width="1.3"/>
<path d="M636.2 638.3 Q638.8 633.9 642 633.9 Q645.2 633.9 647.8 638.3 Q645.2 642.6999999999999 642 642.6999999999999 Q638.8 642.6999999999999 636.2 638.3 Z" fill="none" stroke="#24292e" stroke-width="1.3"/>
<circle cx="642" cy="638.3" r="2.1" fill="none" stroke="#24292e" stroke-width="1.3"/>
<path d="M662.2 634.9 H672.2 M665.6 634.5999999999999 V633.3 Q665.6 632.8 666.2 632.8 H668.2 Q668.8000000000001 632.8 668.8000000000001 633.3 V634.5999999999999" fill="none" stroke="#24292e" stroke-width="1.4"/>
<path d="M663.3000000000001 635.0999999999999 V642.9 Q663.3000000000001 643.9 664.3000000000001 643.9 H670.1 Q671.1 643.9 671.1 642.9 V635.0999999999999" fill="none" stroke="#24292e" stroke-width="1.4"/>
<path d="M666.0 637.3 V641.5999999999999 M668.4000000000001 637.3 V641.5999999999999" fill="none" stroke="#24292e" stroke-width="1.1"/>
<circle cx="694.40" cy="634.70" r="1.3" fill="#6e7277"/>
<circle cx="699.20" cy="634.70" r="1.3" fill="#6e7277"/>
<circle cx="694.40" cy="639.00" r="1.3" fill="#6e7277"/>
<circle cx="699.20" cy="639.00" r="1.3" fill="#6e7277"/>
<circle cx="694.40" cy="643.30" r="1.3" fill="#6e7277"/>
<circle cx="699.20" cy="643.30" r="1.3" fill="#6e7277"/>
<circle cx="83.2" cy="671.5" r="4.9" fill="none" stroke="#55595e" stroke-width="1.1"/>
<path d="M83.2 670.3 V674.3" stroke="#55595e" stroke-width="1.2"/><circle cx="83.2" cy="668.6" r="0.7" fill="#55595e"/>
<polyline points="690.70,670.70 693.30,673.30 695.90,670.70" stroke="#24292e" stroke-width="1.2" fill="none" stroke-linecap="round" stroke-linejoin="round" />
<polyline points="702.70,707.25 705.20,704.75 707.70,707.25" stroke="#4a4e53" stroke-width="1.25" fill="none" stroke-linecap="round" stroke-linejoin="round" />
<polyline points="42.00,733.15 44.30,735.45 46.60,733.15" stroke="#24292e" stroke-width="1.3" fill="none" stroke-linecap="round" stroke-linejoin="round" />
<polyline points="42.00,736.55 44.30,738.85 46.60,736.55" stroke="#24292e" stroke-width="1.3" fill="none" stroke-linecap="round" stroke-linejoin="round" />
<polyline points="70.10,735.65 72.40,733.35 74.70,735.65" stroke="#24292e" stroke-width="1.3" fill="none" stroke-linecap="round" stroke-linejoin="round" />
<polyline points="70.10,739.45 72.40,737.15 74.70,739.45" stroke="#24292e" stroke-width="1.3" fill="none" stroke-linecap="round" stroke-linejoin="round" />
<line x1="106.8" y1="736" x2="117.4" y2="736" stroke="#fff" stroke-width="1.5" />
<line x1="112.1" y1="730.7" x2="112.1" y2="741.3" stroke="#fff" stroke-width="1.5" />
<polyline points="42.75,769.30 45.45,772.00 42.75,774.70" stroke="#84878b" stroke-width="1.2" fill="none" stroke-linecap="round" stroke-linejoin="round" />
<path d="M671.2 768.7 H681.2 M674.6 768.4 V767.1 Q674.6 766.6 675.2 766.6 H677.2 Q677.8000000000001 766.6 677.8000000000001 767.1 V768.4" fill="none" stroke="#24292e" stroke-width="1.4"/>
<path d="M672.3000000000001 768.9 V776.7 Q672.3000000000001 777.7 673.3000000000001 777.7 H679.1 Q680.1 777.7 680.1 776.7 V768.9" fill="none" stroke="#24292e" stroke-width="1.4"/>
<path d="M675.0 771.1 V775.4 M677.4000000000001 771.1 V775.4" fill="none" stroke="#24292e" stroke-width="1.1"/>
<circle cx="696.50" cy="768.40" r="1.3" fill="#6e7277"/>
<circle cx="701.30" cy="768.40" r="1.3" fill="#6e7277"/>
<circle cx="696.50" cy="772.70" r="1.3" fill="#6e7277"/>
<circle cx="701.30" cy="772.70" r="1.3" fill="#6e7277"/>
<circle cx="696.50" cy="777.00" r="1.3" fill="#6e7277"/>
<circle cx="701.30" cy="777.00" r="1.3" fill="#6e7277"/>
<polyline points="42.75,801.50 45.45,804.20 42.75,806.90" stroke="#84878b" stroke-width="1.2" fill="none" stroke-linecap="round" stroke-linejoin="round" />
<path d="M671.2 800.9000000000001 H681.2 M674.6 800.6 V799.3000000000001 Q674.6 798.8000000000001 675.2 798.8000000000001 H677.2 Q677.8000000000001 798.8000000000001 677.8000000000001 799.3000000000001 V800.6" fill="none" stroke="#24292e" stroke-width="1.4"/>
<path d="M672.3000000000001 801.1 V808.9000000000001 Q672.3000000000001 809.9000000000001 673.3000000000001 809.9000000000001 H679.1 Q680.1 809.9000000000001 680.1 808.9000000000001 V801.1" fill="none" stroke="#24292e" stroke-width="1.4"/>
<path d="M675.0 803.3000000000001 V807.6 M677.4000000000001 803.3000000000001 V807.6" fill="none" stroke="#24292e" stroke-width="1.1"/>
<circle cx="696.50" cy="800.60" r="1.3" fill="#6e7277"/>
<circle cx="701.30" cy="800.60" r="1.3" fill="#6e7277"/>
<circle cx="696.50" cy="804.90" r="1.3" fill="#6e7277"/>
<circle cx="701.30" cy="804.90" r="1.3" fill="#6e7277"/>
<circle cx="696.50" cy="809.20" r="1.3" fill="#6e7277"/>
<circle cx="701.30" cy="809.20" r="1.3" fill="#6e7277"/>
<polyline points="42.75,833.60 45.45,836.30 42.75,839.00" stroke="#84878b" stroke-width="1.2" fill="none" stroke-linecap="round" stroke-linejoin="round" />
<path d="M671.2 833.0 H681.2 M674.6 832.6999999999999 V831.4 Q674.6 830.9 675.2 830.9 H677.2 Q677.8000000000001 830.9 677.8000000000001 831.4 V832.6999999999999" fill="none" stroke="#24292e" stroke-width="1.4"/>
<path d="M672.3000000000001 833.1999999999999 V841.0 Q672.3000000000001 842.0 673.3000000000001 842.0 H679.1 Q680.1 842.0 680.1 841.0 V833.1999999999999" fill="none" stroke="#24292e" stroke-width="1.4"/>
<path d="M675.0 835.4 V839.6999999999999 M677.4000000000001 835.4 V839.6999999999999" fill="none" stroke="#24292e" stroke-width="1.1"/>
<circle cx="696.50" cy="832.70" r="1.3" fill="#6e7277"/>
<circle cx="701.30" cy="832.70" r="1.3" fill="#6e7277"/>
<circle cx="696.50" cy="837.00" r="1.3" fill="#6e7277"/>
<circle cx="701.30" cy="837.00" r="1.3" fill="#6e7277"/>
<circle cx="696.50" cy="841.30" r="1.3" fill="#6e7277"/>
<circle cx="701.30" cy="841.30" r="1.3" fill="#6e7277"/>
<polyline points="42.75,866.50 45.45,869.20 42.75,871.90" stroke="#84878b" stroke-width="1.2" fill="none" stroke-linecap="round" stroke-linejoin="round" />
<path d="M671.2 865.9000000000001 H681.2 M674.6 865.6 V864.3000000000001 Q674.6 863.8000000000001 675.2 863.8000000000001 H677.2 Q677.8000000000001 863.8000000000001 677.8000000000001 864.3000000000001 V865.6" fill="none" stroke="#24292e" stroke-width="1.4"/>
<path d="M672.3000000000001 866.1 V873.9000000000001 Q672.3000000000001 874.9000000000001 673.3000000000001 874.9000000000001 H679.1 Q680.1 874.9000000000001 680.1 873.9000000000001 V866.1" fill="none" stroke="#24292e" stroke-width="1.4"/>
<path d="M675.0 868.3000000000001 V872.6 M677.4000000000001 868.3000000000001 V872.6" fill="none" stroke="#24292e" stroke-width="1.1"/>
<circle cx="696.50" cy="865.60" r="1.3" fill="#6e7277"/>
<circle cx="701.30" cy="865.60" r="1.3" fill="#6e7277"/>
<circle cx="696.50" cy="869.90" r="1.3" fill="#6e7277"/>
<circle cx="701.30" cy="869.90" r="1.3" fill="#6e7277"/>
<circle cx="696.50" cy="874.20" r="1.3" fill="#6e7277"/>
<circle cx="701.30" cy="874.20" r="1.3" fill="#6e7277"/>
<polyline points="702.70,905.75 705.20,903.25 707.70,905.75" stroke="#4a4e53" stroke-width="1.25" fill="none" stroke-linecap="round" stroke-linejoin="round" />
<polyline points="42.00,931.65 44.30,933.95 46.60,931.65" stroke="#24292e" stroke-width="1.3" fill="none" stroke-linecap="round" stroke-linejoin="round" />
<polyline points="42.00,935.05 44.30,937.35 46.60,935.05" stroke="#24292e" stroke-width="1.3" fill="none" stroke-linecap="round" stroke-linejoin="round" />
<polyline points="70.10,934.15 72.40,931.85 74.70,934.15" stroke="#24292e" stroke-width="1.3" fill="none" stroke-linecap="round" stroke-linejoin="round" />
<polyline points="70.10,937.95 72.40,935.65 74.70,937.95" stroke="#24292e" stroke-width="1.3" fill="none" stroke-linecap="round" stroke-linejoin="round" />
<line x1="106.8" y1="934.5" x2="117.4" y2="934.5" stroke="#fff" stroke-width="1.5" />
<line x1="112.1" y1="929.2" x2="112.1" y2="939.8" stroke="#fff" stroke-width="1.5" />
<polyline points="42.75,970.40 45.45,973.10 42.75,975.80" stroke="#84878b" stroke-width="1.2" fill="none" stroke-linecap="round" stroke-linejoin="round" />
<path d="M648.7 970.1 H647.0 Q646.2 970.1 646.2 970.9 V977.6 Q646.2 978.4 647.0 978.4 H652.0 Q652.8 978.4 652.8 977.6 V975.9" fill="none" stroke="#24292e" stroke-width="1.3"/>
<path d="M648.7 968.3000000000001 H652.5 L655.8 971.6 V975.1 Q655.8 975.9 655.0 975.9 H649.5 Q648.7 975.9 648.7 975.1 Z" fill="none" stroke="#24292e" stroke-width="1.3"/>
<path d="M667.9 969.9000000000001 H677.9 M671.3 969.6 V968.3000000000001 Q671.3 967.8000000000001 671.9 967.8000000000001 H673.9 Q674.5 967.8000000000001 674.5 968.3000000000001 V969.6" fill="none" stroke="#24292e" stroke-width="1.4"/>
<path d="M669.0 970.1 V977.9000000000001 Q669.0 978.9000000000001 670.0 978.9000000000001 H675.8 Q676.8 978.9000000000001 676.8 977.9000000000001 V970.1" fill="none" stroke="#24292e" stroke-width="1.4"/>
<path d="M671.6999999999999 972.3000000000001 V976.6 M674.1 972.3000000000001 V976.6" fill="none" stroke="#24292e" stroke-width="1.1"/>
<circle cx="691.70" cy="969.50" r="1.3" fill="#6e7277"/>
<circle cx="696.50" cy="969.50" r="1.3" fill="#6e7277"/>
<circle cx="691.70" cy="973.80" r="1.3" fill="#6e7277"/>
<circle cx="696.50" cy="973.80" r="1.3" fill="#6e7277"/>
<circle cx="691.70" cy="978.10" r="1.3" fill="#6e7277"/>
<circle cx="696.50" cy="978.10" r="1.3" fill="#6e7277"/>
<circle cx="763.3" cy="75.8" r="4.9" fill="none" stroke="#24292e" stroke-width="1.3"/>
<line x1="766.8" y1="79.3" x2="770" y2="82.5" stroke="#24292e" stroke-width="1.4" />
<polyline points="754.70,117.20 757.30,119.80 754.70,122.40" stroke="#24292e" stroke-width="1.3" fill="none" stroke-linecap="round" stroke-linejoin="round" />
<polyline points="753.70,148.90 756.30,151.50 758.90,148.90" stroke="#24292e" stroke-width="1.3" fill="none" stroke-linecap="round" stroke-linejoin="round" />
<polyline points="753.70,373.90 756.30,376.50 758.90,373.90" stroke="#24292e" stroke-width="1.3" fill="none" stroke-linecap="round" stroke-linejoin="round" />
<polyline points="753.70,478.50 756.30,481.10 758.90,478.50" stroke="#24292e" stroke-width="1.3" fill="none" stroke-linecap="round" stroke-linejoin="round" />
<rect x="1407.0" y="595.8" width="3.1" height="2" fill="#5b5bf0"/>
<rect x="1411.1" y="595.8" width="8.8" height="2" fill="#6f6f6f"/>
<rect x="1421.3" y="595.8" width="0.8" height="2" fill="#6f6f6f"/>
<rect x="1423.1" y="595.8" width="3.1" height="2" fill="#6f6f6f"/>
<rect x="1407.0" y="598.8" width="3.1" height="2" fill="#5b5bf0"/>
<rect x="1411.1" y="598.8" width="8.8" height="2" fill="#6f6f6f"/>
<rect x="1421.3" y="598.8" width="0.8" height="2" fill="#6f6f6f"/>
<rect x="1423.1" y="598.8" width="3.1" height="2" fill="#6f6f6f"/>
<rect x="1407.0" y="601.8" width="3.1" height="2" fill="#5b5bf0"/>
<rect x="1411.1" y="601.8" width="6.0" height="2" fill="#6f6f6f"/>
<rect x="1418.0" y="601.8" width="0.8" height="2" fill="#6f6f6f"/>
<rect x="1420.1" y="601.8" width="2.9" height="2" fill="#6f6f6f"/>
<rect x="1407.0" y="607.8" width="3.1" height="2" fill="#5aae5a"/>
<rect x="1408.0" y="610.8" width="1.0" height="2" fill="#5aae5a"/>
<rect x="1410.1" y="610.8" width="3.8" height="2" fill="#5aae5a"/>
<rect x="1415.0" y="610.8" width="6.0" height="2" fill="#5aae5a"/>
<rect x="1408.0" y="613.8" width="2.1" height="2" fill="#5aae5a"/>
<rect x="1407.0" y="616.8" width="32.8" height="2" fill="#6f6f6f"/>
<rect x="1440.8" y="616.8" width="2.1" height="2" fill="#6f6f6f"/>
<rect x="1443.9" y="616.8" width="1.1" height="2" fill="#6f6f6f"/>
<rect x="1409.1" y="619.8" width="8.9" height="2" fill="#6f6f6f"/>
<rect x="1419.2" y="619.8" width="1.0" height="2" fill="#6f6f6f"/>
<rect x="1411.1" y="622.8" width="16.9" height="2" fill="#6f6f6f"/>
<rect x="1428.9" y="622.8" width="2.1" height="2" fill="#6f6f6f"/>
<rect x="1432.0" y="622.8" width="6.0" height="2" fill="#6f6f6f"/>
<rect x="1439.0" y="622.8" width="2.9" height="2" fill="#6f6f6f"/>
<rect x="1442.9" y="622.8" width="10.1" height="2" fill="#c27272"/>
<rect x="1453.0" y="622.8" width="15.1" height="2" fill="#6f6f6f"/>
<rect x="1469.2" y="622.8" width="2.0" height="2" fill="#6f6f6f"/>
<rect x="1411.1" y="625.8" width="16.9" height="2" fill="#6f6f6f"/>
<rect x="1428.9" y="625.8" width="2.1" height="2" fill="#6f6f6f"/>
<rect x="1432.0" y="625.8" width="6.0" height="2" fill="#6f6f6f"/>
<rect x="1439.0" y="625.8" width="2.9" height="2" fill="#6f6f6f"/>
<rect x="1442.9" y="625.8" width="10.1" height="2" fill="#c27272"/>
<rect x="1453.0" y="625.8" width="9.1" height="2" fill="#6f6f6f"/>
<rect x="1409.1" y="628.8" width="10.1" height="2" fill="#6f6f6f"/>
<rect x="1420.1" y="628.8" width="0.8" height="2" fill="#6f6f6f"/>
<rect x="1411.1" y="631.8" width="16.9" height="2" fill="#6f6f6f"/>
<rect x="1428.9" y="631.8" width="2.1" height="2" fill="#6f6f6f"/>
<rect x="1432.0" y="631.8" width="6.0" height="2" fill="#6f6f6f"/>
<rect x="1439.0" y="631.8" width="2.9" height="2" fill="#6f6f6f"/>
<rect x="1442.9" y="631.8" width="11.2" height="2" fill="#c27272"/>
<rect x="1454.1" y="631.8" width="15.0" height="2" fill="#6f6f6f"/>
<rect x="1470.2" y="631.8" width="1.8" height="2" fill="#6f6f6f"/>
<rect x="1411.1" y="634.8" width="16.9" height="2" fill="#6f6f6f"/>
<rect x="1428.9" y="634.8" width="2.1" height="2" fill="#6f6f6f"/>
<rect x="1432.0" y="634.8" width="6.0" height="2" fill="#6f6f6f"/>
<rect x="1439.0" y="634.8" width="2.9" height="2" fill="#6f6f6f"/>
<rect x="1442.9" y="634.8" width="11.2" height="2" fill="#c27272"/>
<rect x="1454.1" y="634.8" width="9.1" height="2" fill="#6f6f6f"/>
<rect x="1409.1" y="637.8" width="5.9" height="2" fill="#6f6f6f"/>
<rect x="1416.1" y="637.8" width="1.0" height="2" fill="#6f6f6f"/>
<rect x="1411.1" y="640.8" width="16.9" height="2" fill="#6f6f6f"/>
<rect x="1428.9" y="640.8" width="2.1" height="2" fill="#6f6f6f"/>
<rect x="1432.0" y="640.8" width="6.0" height="2" fill="#6f6f6f"/>
<rect x="1439.0" y="640.8" width="2.9" height="2" fill="#6f6f6f"/>
<rect x="1442.9" y="640.8" width="7.0" height="2" fill="#c27272"/>
<rect x="1449.9" y="640.8" width="15.1" height="2" fill="#6f6f6f"/>
<rect x="1466.0" y="640.8" width="2.1" height="2" fill="#6f6f6f"/>
<rect x="1411.1" y="643.8" width="16.9" height="2" fill="#6f6f6f"/>
<rect x="1428.9" y="643.8" width="2.1" height="2" fill="#6f6f6f"/>
<rect x="1432.0" y="643.8" width="6.0" height="2" fill="#6f6f6f"/>
<rect x="1439.0" y="643.8" width="2.9" height="2" fill="#6f6f6f"/>
<rect x="1442.9" y="643.8" width="7.0" height="2" fill="#c27272"/>
<rect x="1449.9" y="643.8" width="9.1" height="2" fill="#6f6f6f"/>
<rect x="1407.0" y="646.8" width="3.1" height="2" fill="#6f6f6f"/>
<rect x="1407.0" y="652.8" width="3.1" height="2" fill="#5aae5a"/>
<rect x="1408.0" y="655.8" width="1.0" height="2" fill="#5aae5a"/>
<rect x="1410.1" y="655.8" width="4.9" height="2" fill="#5aae5a"/>
<rect x="1408.0" y="658.8" width="2.1" height="2" fill="#5aae5a"/>
<rect x="1407.0" y="661.8" width="5.0" height="2" fill="#5b5bf0"/>
<rect x="1413.0" y="661.8" width="5.0" height="2" fill="#6f6f6f"/>
<rect x="1419.2" y="661.8" width="1.0" height="2" fill="#6f6f6f"/>
<rect x="1421.1" y="661.8" width="26.0" height="2" fill="#6f6f6f"/>
<rect x="1448.1" y="661.8" width="1.8" height="2" fill="#6f6f6f"/>
<rect x="1451.2" y="661.8" width="1.8" height="2" fill="#6f6f6f"/>
<rect x="1454.1" y="661.8" width="10.9" height="2" fill="#6f6f6f"/>
<rect x="1466.0" y="661.8" width="15.0" height="2" fill="#6f6f6f"/>
<rect x="1407.0" y="667.8" width="3.1" height="2" fill="#5aae5a"/>
<rect x="1408.0" y="670.8" width="1.0" height="2" fill="#5aae5a"/>
<rect x="1410.1" y="670.8" width="6.0" height="2" fill="#5aae5a"/>
<rect x="1408.0" y="673.8" width="2.1" height="2" fill="#5aae5a"/>
<rect x="1407.0" y="676.8" width="5.0" height="2" fill="#5b5bf0"/>
<rect x="1413.0" y="676.8" width="6.0" height="2" fill="#6f6f6f"/>
<rect x="1420.0" y="676.8" width="1.0" height="2" fill="#6f6f6f"/>
<rect x="1422.0" y="676.8" width="24.0" height="2" fill="#6f6f6f"/>
<rect x="1447.1" y="676.8" width="2.0" height="2" fill="#6f6f6f"/>
<rect x="1449.9" y="676.8" width="2.1" height="2" fill="#6f6f6f"/>
<rect x="1453.0" y="676.8" width="1.1" height="2" fill="#6f6f6f"/>
<rect x="1409.0" y="679.8" width="6.0" height="2" fill="#5b5bf0"/>
<rect x="1415.9" y="679.8" width="1.0" height="2" fill="#6f6f6f"/>
<rect x="1411.1" y="682.8" width="4.8" height="2" fill="#6f6f6f"/>
<rect x="1417.1" y="682.8" width="9.9" height="2" fill="#c27272"/>
<rect x="1411.1" y="685.8" width="16.8" height="2" fill="#6f6f6f"/>
<rect x="1429.0" y="685.8" width="5.6" height="2" fill="#c27272"/>
<rect x="1411.1" y="688.8" width="4.8" height="2" fill="#6f6f6f"/>
<rect x="1417.1" y="688.8" width="15.7" height="2" fill="#6f6f6f"/>
<rect x="1434.2" y="688.8" width="8.7" height="2" fill="#6f6f6f"/>
<rect x="1444.0" y="688.8" width="11.9" height="2" fill="#6f6f6f"/>
<rect x="1411.1" y="691.8" width="6.9" height="2" fill="#6f6f6f"/>
<rect x="1418.9" y="691.8" width="1.2" height="2" fill="#6f6f6f"/>
<rect x="1413.1" y="694.8" width="5.8" height="2" fill="#6f6f6f"/>
<rect x="1420.1" y="694.8" width="2.0" height="2" fill="#3f9d8d"/>
<rect x="1413.1" y="697.8" width="3.9" height="2" fill="#6f6f6f"/>
<rect x="1418.0" y="697.8" width="2.1" height="2" fill="#3f9d8d"/>
<rect x="1413.1" y="700.8" width="3.9" height="2" fill="#6f6f6f"/>
<rect x="1418.0" y="700.8" width="2.1" height="2" fill="#3f9d8d"/>
<rect x="1411.1" y="703.8" width="2.0" height="2" fill="#6f6f6f"/>
<rect x="1409.0" y="706.8" width="2.1" height="2" fill="#6f6f6f"/>
<rect x="1407.0" y="709.8" width="3.0" height="2" fill="#6f6f6f"/>
<rect x="1407.0" y="715.8" width="3.0" height="2" fill="#5aae5a"/>
<rect x="1408.1" y="718.8" width="0.8" height="2" fill="#5aae5a"/>
<rect x="1410.2" y="718.8" width="6.7" height="2" fill="#5aae5a"/>
<rect x="1408.1" y="721.8" width="1.8" height="2" fill="#5aae5a"/>
<rect x="1407.0" y="724.8" width="5.9" height="2" fill="#5b5bf0"/>
<rect x="1414.0" y="724.8" width="1.1" height="2" fill="#6f6f6f"/>
<rect x="1409.0" y="727.8" width="3.9" height="2" fill="#6f6f6f"/>
<rect x="1414.0" y="727.8" width="1.1" height="2" fill="#6f6f6f"/>
<rect x="1411.1" y="730.8" width="3.9" height="2" fill="#6f6f6f"/>
<rect x="1415.9" y="730.8" width="5.0" height="2" fill="#c27272"/>
<rect x="1421.0" y="730.8" width="1.1" height="2" fill="#6f6f6f"/>
<rect x="1411.1" y="733.8" width="4.8" height="2" fill="#6f6f6f"/>
<rect x="1417.1" y="733.8" width="3.9" height="2" fill="#5b5bf0"/>
<rect x="1421.0" y="733.8" width="1.1" height="2" fill="#6f6f6f"/>
<rect x="1411.1" y="736.8" width="9.9" height="2" fill="#6f6f6f"/>
<rect x="1422.0" y="736.8" width="0.9" height="2" fill="#6f6f6f"/>
<rect x="1413.1" y="739.8" width="9.9" height="2" fill="#6f6f6f"/>
<rect x="1424.0" y="739.8" width="9.0" height="2" fill="#c27272"/>
<rect x="1433.0" y="739.8" width="0.9" height="2" fill="#6f6f6f"/>
<rect x="1411.1" y="742.8" width="2.0" height="2" fill="#6f6f6f"/>
<rect x="1409.0" y="745.8" width="2.1" height="2" fill="#6f6f6f"/>
<rect x="1409.0" y="748.8" width="7.9" height="2" fill="#6f6f6f"/>
<rect x="1418.0" y="748.8" width="3.0" height="2" fill="#6f6f6f"/>
<rect x="1409.0" y="751.8" width="6.9" height="2" fill="#6f6f6f"/>
<rect x="1417.1" y="751.8" width="3.0" height="2" fill="#6f6f6f"/>
<rect x="1409.0" y="754.8" width="6.9" height="2" fill="#6f6f6f"/>
<rect x="1417.1" y="754.8" width="0.9" height="2" fill="#6f6f6f"/>
<rect x="1411.1" y="757.8" width="9.9" height="2" fill="#6f6f6f"/>
<rect x="1411.1" y="760.8" width="0.9" height="2" fill="#6f6f6f"/>
<rect x="1413.1" y="763.8" width="4.9" height="2" fill="#6f6f6f"/>
<rect x="1419.2" y="763.8" width="7.8" height="2" fill="#c27272"/>
<rect x="1413.1" y="766.8" width="4.9" height="2" fill="#6f6f6f"/>
<rect x="1419.2" y="766.8" width="7.8" height="2" fill="#c27272"/>
<rect x="1413.1" y="769.8" width="16.9" height="2" fill="#6f6f6f"/>
<rect x="1431.0" y="769.8" width="5.8" height="2" fill="#c27272"/>
<rect x="1413.1" y="772.8" width="9.0" height="2" fill="#6f6f6f"/>
<rect x="1423.1" y="772.8" width="1.8" height="2" fill="#3f9d8d"/>
<rect x="1413.1" y="775.8" width="9.0" height="2" fill="#6f6f6f"/>
<rect x="1423.1" y="775.8" width="0.9" height="2" fill="#6f6f6f"/>
<rect x="1415.0" y="778.8" width="5.9" height="2" fill="#6f6f6f"/>
<rect x="1422.0" y="778.8" width="0.9" height="2" fill="#6f6f6f"/>
<rect x="1417.1" y="781.8" width="4.9" height="2" fill="#6f6f6f"/>
<rect x="1423.1" y="781.8" width="5.9" height="2" fill="#5b5bf0"/>
<rect x="1415.0" y="784.8" width="2.1" height="2" fill="#6f6f6f"/>
<rect x="1413.1" y="787.8" width="2.0" height="2" fill="#6f6f6f"/>
<rect x="1413.1" y="790.8" width="9.9" height="2" fill="#6f6f6f"/>
<rect x="1424.0" y="790.8" width="0.9" height="2" fill="#6f6f6f"/>
<rect x="1415.0" y="793.8" width="5.9" height="2" fill="#6f6f6f"/>
<rect x="1422.0" y="793.8" width="9.9" height="2" fill="#c27272"/>
<rect x="1415.0" y="796.8" width="5.9" height="2" fill="#6f6f6f"/>
<rect x="1422.0" y="796.8" width="2.0" height="2" fill="#3f9d8d"/>
<rect x="1415.0" y="799.8" width="7.9" height="2" fill="#6f6f6f"/>
<rect x="1424.0" y="799.8" width="1.8" height="2" fill="#3f9d8d"/>
<rect x="1415.0" y="802.8" width="5.0" height="2" fill="#6f6f6f"/>
<rect x="1421.1" y="802.8" width="8.8" height="2" fill="#c27272"/>
<rect x="1413.1" y="805.8" width="2.0" height="2" fill="#6f6f6f"/>
<rect x="1413.1" y="808.8" width="4.9" height="2" fill="#6f6f6f"/>
<rect x="1419.2" y="808.8" width="0.9" height="2" fill="#6f6f6f"/>
<rect x="1415.0" y="811.8" width="0.9" height="2" fill="#6f6f6f"/>
<rect x="1417.1" y="814.8" width="6.9" height="2" fill="#6f6f6f"/>
<rect x="1425.2" y="814.8" width="5.8" height="2" fill="#6f6f6f"/>
<rect x="1415.0" y="817.8" width="2.1" height="2" fill="#6f6f6f"/>
<rect x="1413.1" y="820.8" width="2.0" height="2" fill="#6f6f6f"/>
<rect x="1411.1" y="823.8" width="2.0" height="2" fill="#6f6f6f"/>
<rect x="1409.0" y="826.8" width="2.1" height="2" fill="#6f6f6f"/>
<rect x="1407.0" y="829.8" width="2.1" height="2" fill="#6f6f6f"/>
<line x1="1483" y1="638.4" x2="1495" y2="638.4" stroke="#444" stroke-width="1.3" />
<polygon points="232.1,125.0 234.8,128.9 239.0,126.8 251.5,128.6 258.5,131.0 272.4,132.0 291.9,132.8 304.1,135.6 304.1,194.3 311.3,193.6 316.9,197.1 323.9,201.9 325.9,198.4 330.8,197.1 336.4,201.2 344.7,211.0 354.5,218.6 355.8,226.3 351.0,229.7 344.7,226.3 340.5,222.1 335.0,217.9 329.4,212.4 323.9,208.2 316.9,203.3 309.9,198.4 303.0,195.7 289.1,195.0 280.7,192.2 275.2,192.9 271.0,195.7 261.3,198.4 254.3,199.8 253.6,195.7 258.5,190.1 262.7,188.0 255.7,188.0 247.4,195.7 241.8,201.2 244.6,204.0 240.4,206.8 227.9,213.1 219.5,218.6 212.6,222.4 209.1,221.4 216.8,215.8 223.7,209.6 227.9,204.0 229.3,202.6 219.5,201.9 208.4,204.0 207.0,198.4 197.3,195.7 193.1,192.9 187.6,185.9 191.7,180.4 195.9,176.2 202.9,173.4 211.2,172.0 211.2,166.5 208.4,165.8 198.7,167.9 187.6,167.2 184.1,163.0 179.2,160.9 183.4,158.1 195.9,154.6 205.6,156.7 209.8,156.4 205.6,151.9 191.7,148.4 184.8,144.2 186.2,140.7 198.7,139.3 207.0,131.7 218.2,128.2" fill="#e6e7e9" stroke="#808286" stroke-width="0.75" stroke-linejoin="round"/>
<polyline points="325.2,204.0 335.0,212.4 341.9,220.7 347.5,226.3" fill="none" stroke="#808286" stroke-width="0.75" stroke-linejoin="round"/>
<polyline points="330.8,201.2 339.2,209.6 347.5,217.9" fill="none" stroke="#808286" stroke-width="0.75" stroke-linejoin="round"/>
<polyline points="329.4,198.4 328.0,204.0" fill="none" stroke="#808286" stroke-width="0.75" stroke-linejoin="round"/>
<polygon points="206.3,223.2 211.2,222.1 212.2,224.2 207.0,225.2" fill="#e6e7e9" stroke="#808286" stroke-width="0.75" stroke-linejoin="round"/>
<polygon points="194.5,227.0 201.5,225.4 202.0,227.4 195.2,228.6" fill="#e6e7e9" stroke="#808286" stroke-width="0.75" stroke-linejoin="round"/>
<polygon points="183.1,233.2 188.9,230.4 190.6,231.8 184.5,234.3" fill="#e6e7e9" stroke="#808286" stroke-width="0.75" stroke-linejoin="round"/>
<polygon points="160.4,173.4 166.7,172.0 175.0,175.1 170.9,177.3 161.1,175.1" fill="#e6e7e9" stroke="#808286" stroke-width="0.75" stroke-linejoin="round"/>
<polygon points="181.3,195.0 186.2,193.2 189.6,195.0 185.5,197.1" fill="#e6e7e9" stroke="#808286" stroke-width="0.75" stroke-linejoin="round"/>
<polygon points="240.4,211.0 247.4,206.1 252.9,206.8 250.8,212.4 241.8,215.4" fill="#e6e7e9" stroke="#808286" stroke-width="0.75" stroke-linejoin="round"/>
<rect x="81" y="239.5" width="8" height="1.6" fill="#e6e7e9" stroke="#8a8c8f" stroke-width="0.6"/>
<rect x="131" y="245.5" width="6" height="1.4" fill="#e6e7e9" stroke="#8a8c8f" stroke-width="0.6"/>
<rect x="146" y="242.5" width="10" height="1.4" fill="#e6e7e9" stroke="#8a8c8f" stroke-width="0.6"/>
<rect x="164" y="240" width="3" height="1.2" fill="#e6e7e9" stroke="#8a8c8f" stroke-width="0.6"/>
<rect x="176" y="234.5" width="9" height="1.6" fill="#e6e7e9" stroke="#8a8c8f" stroke-width="0.6"/>
<rect x="167.5" y="213" width="1.2" height="1.2" fill="#e6e7e9" stroke="#8a8c8f" stroke-width="0.6"/>
<rect x="235.5" y="221.5" width="1.2" height="1.2" fill="#e6e7e9" stroke="#8a8c8f" stroke-width="0.6"/>
<polygon points="391.2,263.9 517.6,262.2 517.4,261.6 518.2,264.1 533.0,268.2 543.0,269.8 531.4,278.0 541.3,276.4 549.5,274.8 559.4,276.4 569.3,280.5 571.0,283.8 562.7,283.8 552.8,286.3 551.2,294.5 552.0,309.3 557.8,309.3 557.8,296.2 561.0,284.6 566.0,283.0 571.0,288.0 575.9,297.8 575.0,307.7 579.2,309.3 585.7,307.7 590.7,302.8 592.3,299.5 607.2,293.7 610.4,288.8 618.7,287.9 628.6,287.9 635.1,274.8 643.4,273.9 648.3,289.6 640.1,292.9 633.5,302.8 635.1,308.5 622.0,312.6 615.4,315.1 615.4,318.4 612.1,324.2 608.8,327.5 607.2,334.0 608.8,343.9 605.5,350.5 595.6,357.1 584.1,368.6 580.8,376.8 584.1,386.7 587.4,399.9 586.6,410.6 582.5,409.8 575.9,398.3 572.6,386.7 566.0,380.1 559.4,377.7 547.9,377.7 544.6,385.1 539.6,385.1 533.0,381.8 523.2,383.4 519.3,384.1 510.8,387.5 506.6,395.9 507.5,406.1 502.4,405.3 495.6,390.8 488.8,384.1 481.1,385.8 473.5,380.7 465.0,369.6 456.5,370.5 456.5,373.0 443.0,373.0 426.8,366.2 415.0,365.4 399.7,353.5 392.1,334.8 385.3,328.1 381.0,316.2 381.9,307.7 380.2,306.0 381.9,283.9 379.3,267.8 381.0,266.1" fill="#e6e7e9" stroke="#808286" stroke-width="0.75" stroke-linejoin="round"/>
<polyline points="381.9,283.9 390.4,284.8 403.9,283.1 415.5,283.9" fill="none" stroke="#808286" stroke-width="0.75" stroke-linejoin="round"/>
<polyline points="415.5,263.9 415.5,306.8" fill="none" stroke="#808286" stroke-width="0.75" stroke-linejoin="round"/>
<polyline points="420.6,263.9 420.9,272.1 428.5,280.5 427.7,285.6 434.5,291.6 443.0,289.9" fill="none" stroke="#808286" stroke-width="0.75" stroke-linejoin="round"/>
<polyline points="443.3,288.7 443.3,313.6" fill="none" stroke="#808286" stroke-width="0.75" stroke-linejoin="round"/>
<polyline points="381.9,307.7 443.3,307.2" fill="none" stroke="#808286" stroke-width="0.75" stroke-linejoin="round"/>
<polyline points="443.3,288.7 476.1,288.7" fill="none" stroke="#808286" stroke-width="0.75" stroke-linejoin="round"/>
<polyline points="476.1,263.9 476.1,313.6" fill="none" stroke="#808286" stroke-width="0.75" stroke-linejoin="round"/>
<polyline points="476.1,282.2 510.8,282.2" fill="none" stroke="#808286" stroke-width="0.75" stroke-linejoin="round"/>
<polyline points="476.1,300.9 510.8,300.9" fill="none" stroke="#808286" stroke-width="0.75" stroke-linejoin="round"/>
<polyline points="443.3,313.6 485.4,313.6" fill="none" stroke="#808286" stroke-width="0.75" stroke-linejoin="round"/>
<polyline points="485.4,313.6 485.4,338.2" fill="none" stroke="#808286" stroke-width="0.75" stroke-linejoin="round"/>
<polyline points="485.4,319.6 518.5,319.6" fill="none" stroke="#808286" stroke-width="0.75" stroke-linejoin="round"/>
<polyline points="401.4,307.7 401.4,325.5 426.8,348.4 428.5,358.6 426.8,366.2" fill="none" stroke="#808286" stroke-width="0.75" stroke-linejoin="round"/>
<polyline points="429.4,307.7 429.4,338.2" fill="none" stroke="#808286" stroke-width="0.75" stroke-linejoin="round"/>
<polyline points="452.6,313.6 452.6,373.0" fill="none" stroke="#808286" stroke-width="0.75" stroke-linejoin="round"/>
<polyline points="426.8,338.2 519.3,338.2" fill="none" stroke="#808286" stroke-width="0.75" stroke-linejoin="round"/>
<polyline points="480.3,339.9 480.3,369.6" fill="none" stroke="#808286" stroke-width="0.75" stroke-linejoin="round"/>
<polyline points="480.3,339.9 494.7,339.9 495.6,353.5 505.8,356.9 519.3,356.1" fill="none" stroke="#808286" stroke-width="0.75" stroke-linejoin="round"/>
<polyline points="509.1,263.9 510.8,282.2 510.8,300.9" fill="none" stroke="#808286" stroke-width="0.75" stroke-linejoin="round"/>
<polyline points="510.8,300.9 515.9,311.1 518.5,319.6" fill="none" stroke="#808286" stroke-width="0.75" stroke-linejoin="round"/>
<polyline points="510.0,298.6 535.5,298.6" fill="none" stroke="#808286" stroke-width="0.75" stroke-linejoin="round"/>
<polyline points="533.1,278.1 528.1,287.1 535.5,298.6" fill="none" stroke="#808286" stroke-width="0.75" stroke-linejoin="round"/>
<polyline points="541.3,276.4 551.2,286.3" fill="none" stroke="#808286" stroke-width="0.75" stroke-linejoin="round"/>
<polyline points="535.5,298.6 540.5,306.0 534.7,315.9 536.3,320.9 542.9,335.7 544.6,341.4" fill="none" stroke="#808286" stroke-width="0.75" stroke-linejoin="round"/>
<polyline points="510.0,315.9 534.7,315.9" fill="none" stroke="#808286" stroke-width="0.75" stroke-linejoin="round"/>
<polyline points="519.9,315.9 519.9,341.4" fill="none" stroke="#808286" stroke-width="0.75" stroke-linejoin="round"/>
<polyline points="519.9,341.4 541.3,341.4" fill="none" stroke="#808286" stroke-width="0.75" stroke-linejoin="round"/>
<polyline points="520.7,341.4 521.5,360.4" fill="none" stroke="#808286" stroke-width="0.75" stroke-linejoin="round"/>
<polyline points="521.5,360.4 539.6,360.4" fill="none" stroke="#808286" stroke-width="0.75" stroke-linejoin="round"/>
<polyline points="541.3,341.4 536.3,358.7 534.7,373.6" fill="none" stroke="#808286" stroke-width="0.75" stroke-linejoin="round"/>
<polyline points="521.5,360.4 524.0,383.4" fill="none" stroke="#808286" stroke-width="0.75" stroke-linejoin="round"/>
<polyline points="534.7,373.6 544.6,373.6 545.4,385.1" fill="none" stroke="#808286" stroke-width="0.75" stroke-linejoin="round"/>
<polyline points="549.5,351.3 548.7,377.7" fill="none" stroke="#808286" stroke-width="0.75" stroke-linejoin="round"/>
<polyline points="562.7,351.3 564.3,376.9" fill="none" stroke="#808286" stroke-width="0.75" stroke-linejoin="round"/>
<polyline points="548.7,377.7 582.5,377.7" fill="none" stroke="#808286" stroke-width="0.75" stroke-linejoin="round"/>
<polyline points="539.6,351.3 572.6,350.5" fill="none" stroke="#808286" stroke-width="0.75" stroke-linejoin="round"/>
<polyline points="542.9,340.6 607.2,340.6" fill="none" stroke="#808286" stroke-width="0.75" stroke-linejoin="round"/>
<polyline points="572.6,350.5 595.6,357.1" fill="none" stroke="#808286" stroke-width="0.75" stroke-linejoin="round"/>
<polyline points="572.6,351.3 584.1,368.6" fill="none" stroke="#808286" stroke-width="0.75" stroke-linejoin="round"/>
<polyline points="544.6,335.7 552.8,331.6 566.0,327.5 575.9,330.7" fill="none" stroke="#808286" stroke-width="0.75" stroke-linejoin="round"/>
<polyline points="552.5,309.3 552.8,332.4" fill="none" stroke="#808286" stroke-width="0.75" stroke-linejoin="round"/>
<polyline points="566.0,309.3 566.0,327.5" fill="none" stroke="#808286" stroke-width="0.75" stroke-linejoin="round"/>
<polyline points="552.5,309.3 579.2,309.3" fill="none" stroke="#808286" stroke-width="0.75" stroke-linejoin="round"/>
<polyline points="585.7,307.7 585.7,320.9" fill="none" stroke="#808286" stroke-width="0.75" stroke-linejoin="round"/>
<polyline points="575.9,330.7 582.5,337.3 592.3,329.1 595.6,322.5 605.5,325.8" fill="none" stroke="#808286" stroke-width="0.75" stroke-linejoin="round"/>
<polyline points="585.7,320.9 608.8,320.9" fill="none" stroke="#808286" stroke-width="0.75" stroke-linejoin="round"/>
<polyline points="585.7,307.7 610.4,307.7" fill="none" stroke="#808286" stroke-width="0.75" stroke-linejoin="round"/>
<polyline points="618.7,287.9 618.7,307.7" fill="none" stroke="#808286" stroke-width="0.75" stroke-linejoin="round"/>
<polyline points="628.6,287.9 625.3,302.8" fill="none" stroke="#808286" stroke-width="0.75" stroke-linejoin="round"/>
<polyline points="628.6,287.9 633.5,302.8" fill="none" stroke="#808286" stroke-width="0.75" stroke-linejoin="round"/>
<polyline points="618.7,302.8 633.5,302.8" fill="none" stroke="#808286" stroke-width="0.75" stroke-linejoin="round"/>
<polyline points="618.7,307.7 631.9,307.7" fill="none" stroke="#808286" stroke-width="0.75" stroke-linejoin="round"/>
<polyline points="575.9,330.7 572.6,340.6" fill="none" stroke="#808286" stroke-width="0.75" stroke-linejoin="round"/>
<polyline points="607.2,324.2 608.0,334.0" fill="none" stroke="#808286" stroke-width="0.75" stroke-linejoin="round"/>
<polyline points="610.4,307.7 615.4,318.4" fill="none" stroke="#808286" stroke-width="0.75" stroke-linejoin="round"/>
<circle cx="217.5" cy="430.7" r="1.3" fill="#9a9c9f" stroke="#8a8c8f" stroke-width="0.6"/>
<circle cx="224.5" cy="434.6" r="1.4" fill="#9a9c9f" stroke="#8a8c8f" stroke-width="0.6"/>
<circle cx="228.7" cy="436.7" r="0.6" fill="#9a9c9f" stroke="#8a8c8f" stroke-width="0.6"/>
<circle cx="232.6" cy="438.8" r="1.5" fill="#9a9c9f" stroke="#8a8c8f" stroke-width="0.6"/>
<polygon points="234.5,442.0 239.5,446.5 236.0,450.0 234.0,447.0" fill="#e6e7e9" stroke="#808286" stroke-width="0.75" stroke-linejoin="round"/>
<rect x="647.5" y="452.5" width="7" height="3" rx="1" fill="#e6e7e9" stroke="#8a8c8f" stroke-width="0.7"/>
<line x1="276.6" y1="188" x2="575.9" y2="394.1" stroke="#c4664a" stroke-width="4.6" stroke-dasharray="4.6 4.4" stroke-dashoffset="-7"/>
<circle cx="276.8" cy="188.2" r="5" fill="#5470c6" fill-opacity="0.85"/>
<circle cx="575.9" cy="394.1" r="5" fill="#91cc75" fill-opacity="0.85"/>
</svg>
</body></html>
